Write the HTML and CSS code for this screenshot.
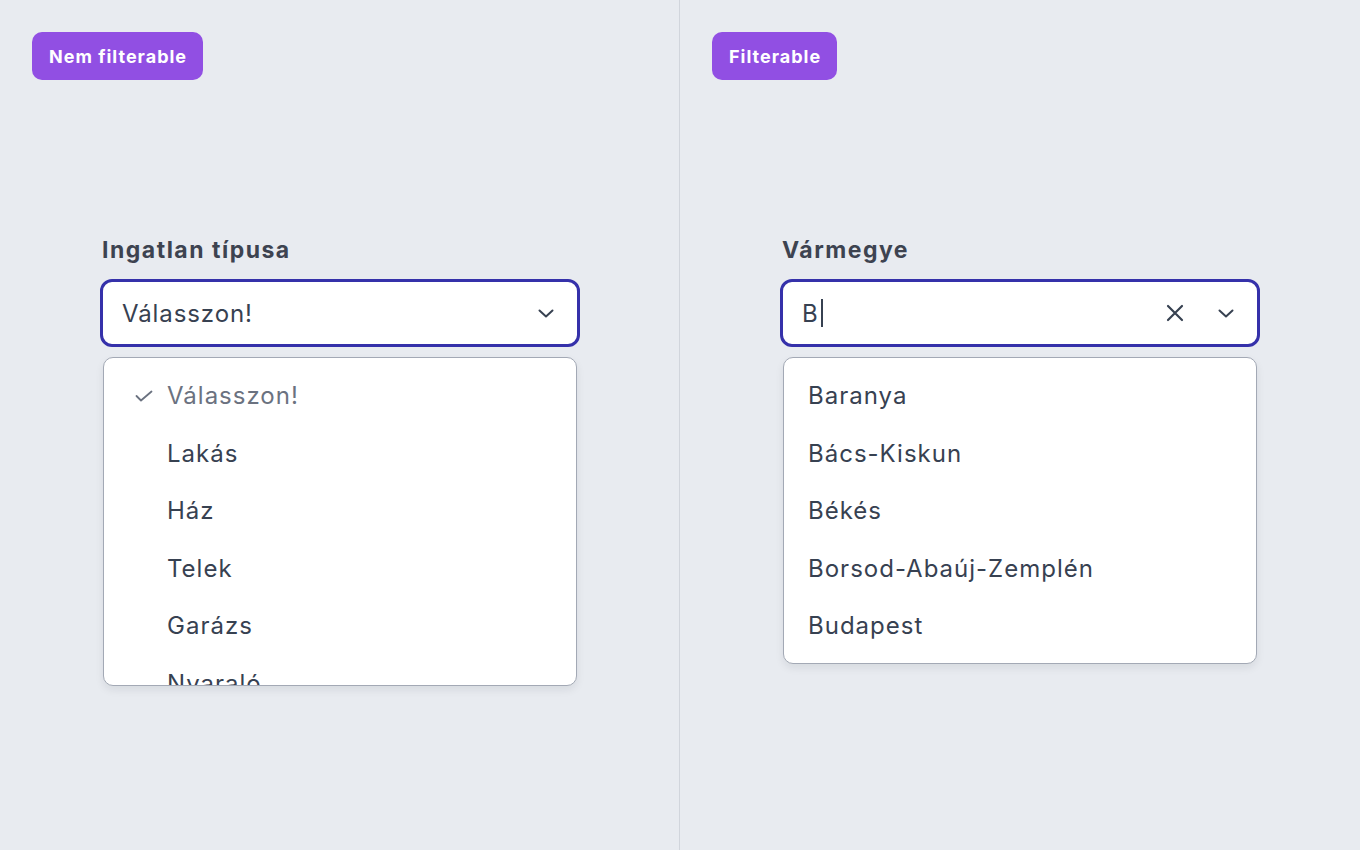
FILE: index.html
```html
<!DOCTYPE html>
<html lang="hu">
<head>
<meta charset="utf-8">
<title>Select</title>
<link rel="stylesheet" href="styles.css">
</head>
<body>
<div class="page">
  <section class="panel">
    <span class="badge">Nem filterable</span>
    <div class="field">
      <div class="label">Ingatlan típusa</div>
      <div class="control">
        <span class="value">Válasszon!</span>
        <span class="icons">
          <svg class="chev" width="16" height="9" viewBox="0 0 16 9"><polyline points="1.5,1.5 8,7.5 14.5,1.5" fill="none" stroke="#374151" stroke-width="2" stroke-linecap="round" stroke-linejoin="round"/></svg>
        </span>
      </div>
      <ul class="menu menu-check">
        <li class="item placeholder"><svg class="check" width="18" height="12" viewBox="0 0 18 12"><polyline points="1.5,6 6,10.5 16.5,1.5" fill="none" stroke="#6b7280" stroke-width="1.8" stroke-linecap="round" stroke-linejoin="round"/></svg>Válasszon!</li>
        <li class="item">Lakás</li>
        <li class="item">Ház</li>
        <li class="item">Telek</li>
        <li class="item">Garázs</li>
        <li class="item">Nyaraló</li>
        <li class="item">Iroda</li>
      </ul>
    </div>
  </section>
  <section class="panel">
    <span class="badge">Filterable</span>
    <div class="field">
      <div class="label">Vármegye</div>
      <div class="control">
        <span class="value">B<span class="caret"></span></span>
        <span class="icons">
          <svg class="clear" width="18" height="18" viewBox="0 0 18 18"><path d="M2 2 16 16M16 2 2 16" fill="none" stroke="#374151" stroke-width="2.2" stroke-linecap="round"/></svg>
          <svg class="chev" width="16" height="9" viewBox="0 0 16 9"><polyline points="1.5,1.5 8,7.5 14.5,1.5" fill="none" stroke="#374151" stroke-width="2" stroke-linecap="round" stroke-linejoin="round"/></svg>
        </span>
      </div>
      <ul class="menu">
        <li class="item">Baranya</li>
        <li class="item">Bács-Kiskun</li>
        <li class="item">Békés</li>
        <li class="item">Borsod-Abaúj-Zemplén</li>
        <li class="item">Budapest</li>
      </ul>
    </div>
  </section>
</div>
</body>
</html>
```

FILE: styles.css
```css
html, body {
  margin: 0;
  padding: 0;
  background: #e8ebf0;
  font-family: Inter, "Noto Sans", sans-serif;
  color: #374151;
}

.page {
  display: flex;
  height: 850px;
}

.panel {
  width: 679px;
  box-sizing: border-box;
  padding: 32px;
  display: flex;
  flex-direction: column;
  align-items: flex-start;
}

.panel + .panel {
  width: 681px;
  border-left: 1px solid #d1d5dc;
}

.badge {
  display: inline-flex;
  align-items: center;
  height: 48px;
  padding: 0 16px 0 17px;
  border-radius: 10px;
  background: #914fe3;
  color: #ffffff;
  font-size: 18px;
  font-weight: 700;
  letter-spacing: 1px;
}

.field {
  margin-top: 154px;
  margin-left: 68px;
  width: 480px;
}

.label {
  font-size: 23px;
  line-height: 32px;
  font-weight: 700;
  color: #3d4350;
  letter-spacing: 1.5px;
  margin: 0 0 13px 2px;
}

.control {
  box-sizing: border-box;
  height: 68px;
  border: 3px solid #3531aa;
  border-radius: 12px;
  background: #ffffff;
  display: flex;
  align-items: center;
  justify-content: space-between;
  padding: 0 23px 0 19px;
}

.value {
  font-size: 24px;
  letter-spacing: 0.9px;
  color: #374151;
  display: inline-flex;
  align-items: center;
}

.caret {
  display: inline-block;
  width: 2px;
  height: 28px;
  margin-left: 2px;
  background: #374151;
}

.icons {
  display: flex;
  align-items: center;
  gap: 34px;
}

.icons svg {
  display: block;
}

.menu {
  list-style: none;
  margin: 10px 3px 0;
  padding: 9px 0 8px;
  background: #ffffff;
  border: 1px solid #a3a9b5;
  border-radius: 10px;
  box-shadow: 0 4px 8px rgba(17, 24, 39, 0.08);
  overflow: hidden;
}

.menu-check {
  max-height: 310px;
}

.item {
  height: 57.5px;
  display: flex;
  align-items: center;
  padding-left: 24px;
  font-size: 24px;
  letter-spacing: 1px;
  color: #374151;
}

.menu-check .item {
  padding-left: 63px;
  position: relative;
}

.item.placeholder {
  color: #6b7280;
}

.check {
  position: absolute;
  left: 31px;
  top: 23px;
}
```
